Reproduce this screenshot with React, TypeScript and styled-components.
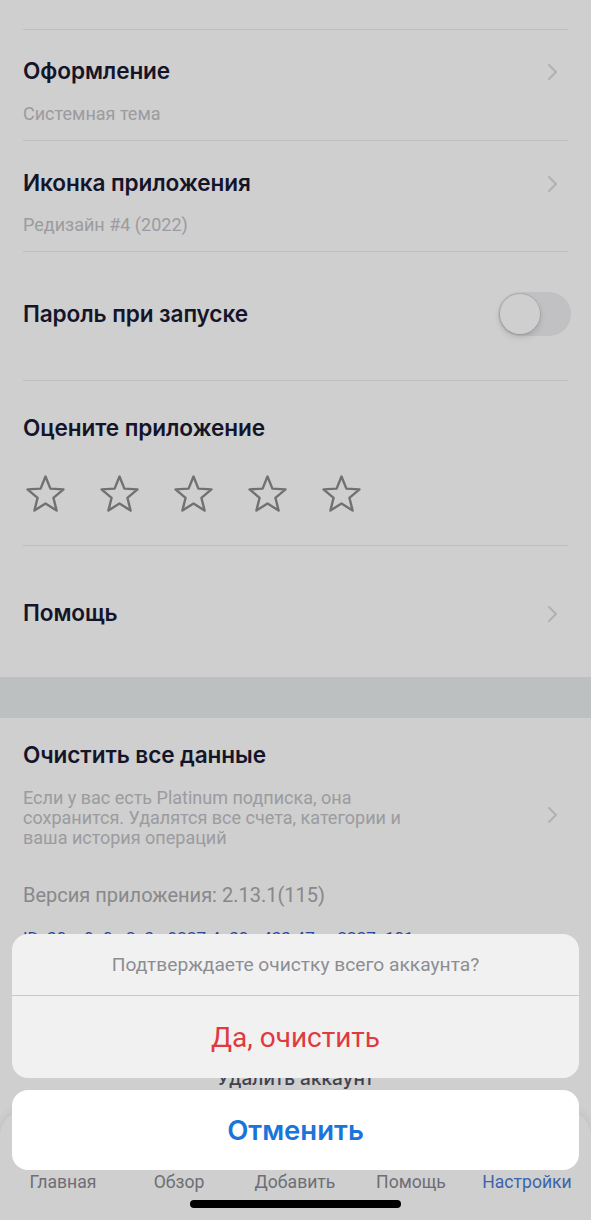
import React from "react";
import styled, { createGlobalStyle } from "styled-components";

const Global = createGlobalStyle`
  html, body { margin: 0; padding: 0; background: #ffffff; }
  body { font-family: "Inter", "Roboto", sans-serif; -webkit-font-smoothing: antialiased; }
  * { box-sizing: border-box; }
`;

const Screen = styled.div`
  position: relative;
  width: 591px;
  height: 1220px;
  overflow: hidden;
  background: #ffffff;
  display: flex;
  flex-direction: column;
`;

const TopGap = styled.div`
  height: 29px;
`;

const Divider = styled.div`
  height: 1px;
  margin: 0 23px;
  background: #ebebee;
`;

const Row = styled.div<{ $h: number; $pt: number }>`
  height: ${(p) => p.$h}px;
  padding: ${(p) => p.$pt}px 23px 0 23px;
  display: flex;
  align-items: flex-start;
  justify-content: space-between;
`;

const RowText = styled.div`
  display: flex;
  flex-direction: column;
`;

const Title = styled.div`
  font-family: "Inter", sans-serif;
  font-weight: 600;
  font-size: 22.6px;
  line-height: 26px;
  color: #1a1a34;
  letter-spacing: -0.1px;
`;

const Subtitle = styled.div<{ $mt?: number }>`
  font-family: "Roboto", sans-serif;
  font-size: 18px;
  line-height: 20px;
  color: #c0c0c5;
  margin-top: ${(p) => p.$mt ?? 0}px;
`;

const ChevronWrap = styled.div<{ $mt: number }>`
  width: 12px;
  height: 18px;
  margin-right: 10px;
  margin-top: ${(p) => p.$mt}px;
  display: flex;
`;

const Chevron = ({ mt }: { mt: number }) => (
  <ChevronWrap $mt={mt}>
    <svg width="12" height="18" viewBox="0 0 12 18">
      <polyline
        points="3,2 10,9 3,16"
        fill="none"
        stroke="#dcdcdf"
        strokeWidth="2.2"
        strokeLinecap="round"
        strokeLinejoin="round"
      />
    </svg>
  </ChevronWrap>
);

const Toggle = styled.div`
  width: 73px;
  height: 44px;
  border-radius: 22px;
  background: #eeeef0;
  margin-top: -9px;
  margin-right: -3px;
  padding: 2px;
  display: flex;
`;

const Knob = styled.div`
  width: 40px;
  height: 40px;
  border-radius: 50%;
  background: #ffffff;
  box-shadow: 0 0 0 1px rgba(0, 0, 0, 0.08), 0 3px 6px rgba(0, 0, 0, 0.15);
`;

const Stars = styled.div`
  display: flex;
  gap: 33px;
  margin-top: 33px;
  margin-left: 2px;
`;

const Star = () => (
  <svg width="41" height="39" viewBox="0 0 41 39">
    <polygon
      points="20.5,2.5 25.4,14.6 38.5,15.4 28.4,23.8 31.6,36.5 20.5,29.5 9.4,36.5 12.6,23.8 2.5,15.4 15.6,14.6"
      fill="none"
      stroke="#8c8c8c"
      strokeWidth="2.4"
      strokeLinejoin="round"
    />
  </svg>
);

const Band = styled.div`
  height: 41px;
  background: #e9edee;
`;

const ClearRow = styled.div`
  padding: 24px 23px 0 23px;
  display: flex;
  align-items: center;
  justify-content: space-between;
`;

const Description = styled.div`
  font-family: "Roboto", sans-serif;
  font-size: 18px;
  line-height: 20px;
  color: #c0c0c5;
  width: 392px;
  margin-top: 20px;
`;

const Version = styled.div`
  font-family: "Roboto", sans-serif;
  font-size: 20px;
  line-height: 24px;
  color: #a8a8ac;
  padding: 35px 23px 0 23px;
`;

const IdLine = styled.div`
  font-family: "Roboto", sans-serif;
  font-size: 17px;
  line-height: 22px;
  color: #3358bd;
  padding: 20px 23px 0 23px;
  white-space: nowrap;
`;

const DeleteAccount = styled.div`
  font-family: "Inter", sans-serif;
  font-weight: 500;
  font-size: 19px;
  line-height: 24px;
  color: #505060;
  text-align: center;
  margin-top: 118px;
`;

const TabBar = styled.div`
  margin-top: auto;
  height: 110px;
  background: #ffffff;
  border-radius: 26px 26px 0 0;
  box-shadow: 0 -2px 10px rgba(0, 0, 0, 0.08);
  display: grid;
  grid-template-columns: repeat(5, 116px);
  padding: 61px 0 0 5px;
`;

const TabLabel = styled.div<{ $active?: boolean }>`
  font-family: "Roboto", sans-serif;
  font-size: 17.6px;
  line-height: 22px;
  text-align: center;
  white-space: nowrap;
  color: ${(p) => (p.$active ? "#4a7cd4" : "#888890")};
`;

const Dim = styled.div`
  position: absolute;
  inset: 0;
  background: rgba(0, 0, 0, 0.19);
`;

const Sheet = styled.div`
  position: absolute;
  left: 12px;
  right: 12px;
  top: 934px;
  display: flex;
  flex-direction: column;
  gap: 12px;
`;

const SheetGroup = styled.div`
  background: #f1f1f2;
  border-radius: 16px;
  display: flex;
  flex-direction: column;
  overflow: hidden;
`;

const SheetTitle = styled.div`
  height: 62px;
  display: flex;
  align-items: center;
  justify-content: center;
  font-family: "Roboto", sans-serif;
  font-size: 19.2px;
  color: #8d8d92;
  border-bottom: 1px solid #c9c9cc;
`;

const SheetAction = styled.div<{ $cancel?: boolean }>`
  height: ${(p) => (p.$cancel ? 80 : 82)}px;
  display: flex;
  align-items: center;
  justify-content: center;
  font-family: ${(p) => (p.$cancel ? '"Inter", sans-serif' : '"Roboto", sans-serif')};
  font-weight: ${(p) => (p.$cancel ? 600 : 400)};
  font-size: ${(p) => (p.$cancel ? 27.5 : 28)}px;
  color: ${(p) => (p.$cancel ? "#1a74d9" : "#e0393e")};
  background: ${(p) => (p.$cancel ? "#ffffff" : "transparent")};
  border-radius: ${(p) => (p.$cancel ? "16px" : "0")};
`;

const HomeIndicator = styled.div`
  position: absolute;
  left: 190px;
  top: 1200px;
  width: 211px;
  height: 8px;
  border-radius: 4px;
  background: #000000;
`;

export default function App() {
  return (
    <>
      <Global />
      <Screen>
        <TopGap />
        <Divider />
        <Row $h={110} $pt={28}>
          <RowText>
            <Title>Оформление</Title>
            <Subtitle $mt={20}>Системная тема</Subtitle>
          </RowText>
          <Chevron mt={5} />
        </Row>
        <Divider />
        <Row $h={110} $pt={29}>
          <RowText>
            <Title>Иконка приложения</Title>
            <Subtitle $mt={19}>Редизайн #4 (2022)</Subtitle>
          </RowText>
          <Chevron mt={5} />
        </Row>
        <Divider />
        <Row $h={128} $pt={49}>
          <Title>Пароль при запуске</Title>
          <Toggle>
            <Knob />
          </Toggle>
        </Row>
        <Divider />
        <Row $h={164} $pt={34}>
          <RowText>
            <Title>Оцените приложение</Title>
            <Stars>
              <Star />
              <Star />
              <Star />
              <Star />
              <Star />
            </Stars>
          </RowText>
        </Row>
        <Divider />
        <Row $h={131} $pt={54}>
          <Title>Помощь</Title>
          <Chevron mt={5} />
        </Row>
        <Band />
        <ClearRow>
          <RowText>
            <Title>Очистить все данные</Title>
            <Description>
              Если у вас есть Platinum подписка, она сохранится. Удалятся все
              счета, категории и ваша история операций
            </Description>
          </RowText>
          <Chevron mt={40} />
        </ClearRow>
        <Version>Версия приложения: 2.13.1(115)</Version>
        <IdLine>ID: 30ac9e0c-2c3e-9227-4c30-a433-47ac-2227a101</IdLine>
        <DeleteAccount>Удалить аккаунт</DeleteAccount>
        <TabBar>
          <TabLabel>Главная</TabLabel>
          <TabLabel>Обзор</TabLabel>
          <TabLabel>Добавить</TabLabel>
          <TabLabel>Помощь</TabLabel>
          <TabLabel $active>Настройки</TabLabel>
        </TabBar>
        <Dim />
        <Sheet>
          <SheetGroup>
            <SheetTitle>Подтверждаете очистку всего аккаунта?</SheetTitle>
            <SheetAction>Да, очистить</SheetAction>
          </SheetGroup>
          <SheetAction $cancel>Отменить</SheetAction>
        </Sheet>
        <HomeIndicator />
      </Screen>
    </>
  );
}
